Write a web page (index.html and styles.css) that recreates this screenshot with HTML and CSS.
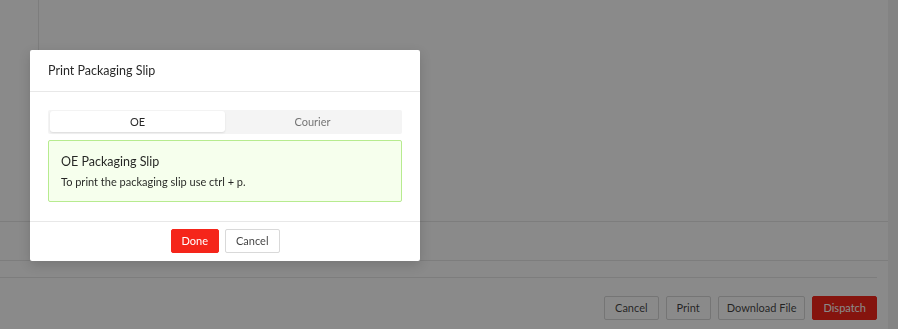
FILE: index.html
```html
<!DOCTYPE html>
<html lang="en">
<head>
<meta charset="utf-8">
<title>Print Packaging Slip</title>
<link rel="stylesheet" href="styles.css">
</head>
<body>
<div class="page">
  <div class="main">
    <div class="top">
      <div class="side"></div>
      <div class="area"></div>
    </div>
    <div class="row"></div>
    <div class="gap"></div>
    <div class="footer">
      <button class="btn">Cancel</button>
      <button class="btn">Print</button>
      <button class="btn btn-narrow">Download File</button>
      <button class="btn btn-red">Dispatch</button>
    </div>
  </div>
  <div class="scroll"></div>
</div>
<div class="overlay"></div>
<div class="modal">
  <div class="modal-header">Print Packaging Slip</div>
  <div class="modal-body">
    <div class="tabs">
      <div class="tab active">OE</div>
      <div class="tab">Courier</div>
    </div>
    <div class="alert">
      <div class="alert-title">OE Packaging Slip</div>
      <div class="alert-desc">To print the packaging slip use ctrl + p.</div>
    </div>
  </div>
  <div class="modal-footer">
    <button class="btn btn-primary">Done</button>
    <button class="btn">Cancel</button>
  </div>
</div>
</body>
</html>
```
FILE: styles.css
```css
* { box-sizing: border-box; }
html, body { margin: 0; padding: 0; }
body {
  width: 898px;
  height: 329px;
  overflow: hidden;
  background: #fff;
  font-family: Lato, "Noto Sans", sans-serif;
  color: rgba(0,0,0,0.85);
}
.page {
  display: flex;
  width: 898px;
  height: 329px;
}
.main {
  flex: 1;
  display: flex;
  flex-direction: column;
}
.scroll {
  width: 10px;
  background: #f3f3f3;
}
.top {
  height: 222px;
  display: flex;
  border-bottom: 1px solid #e8e8e8;
}
.side {
  width: 39px;
  border-right: 1px solid #e8e8e8;
}
.area { flex: 1; }
.row {
  height: 39px;
  border-bottom: 1px solid #e8e8e8;
}
.gap {
  height: 17px;
  margin-right: 11px;
  border-bottom: 1px solid #e8e8e8;
}
.footer {
  display: flex;
  justify-content: flex-end;
  gap: 7px;
  padding: 18px 11px 0 0;
}
.btn {
  height: 24px;
  padding: 0 10px;
  font-family: inherit;
  font-size: 11px;
  color: rgba(0,0,0,0.75);
  background: #fff;
  border: 1px solid #d9d9d9;
  border-radius: 2px;
  line-height: 22px;
}
.btn-narrow { padding: 0 8px; }
.btn-red {
  background: #f5251a;
  border-color: #f5251a;
  color: #fff;
}
.btn-primary {
  background: #f5251a;
  border-color: #f5251a;
  color: #fff;
}
.overlay {
  position: fixed;
  inset: 0;
  background: rgba(0,0,0,0.46);
}
.modal {
  position: absolute;
  left: 30px;
  top: 50px;
  width: 390px;
  background: #fff;
  border-radius: 2px;
  box-shadow: 0 4px 12px rgba(0,0,0,0.15);
}
.modal-header {
  height: 42px;
  padding: 0 18px;
  display: flex;
  align-items: center;
  font-size: 12.5px;
  color: rgba(0,0,0,0.85);
  border-bottom: 1px solid #e8e8e8;
}
.modal-body {
  padding: 18px 18px 19px;
}
.tabs {
  display: flex;
  background: #f4f4f4;
  padding: 1px 2px 2px;
  border-radius: 2px;
  height: 24px;
}
.tab {
  flex: 1;
  display: flex;
  align-items: center;
  justify-content: center;
  font-size: 11px;
  color: rgba(0,0,0,0.55);
  border-radius: 3px;
}
.tab.active {
  background: #fff;
  color: rgba(0,0,0,0.85);
  box-shadow: 0 1px 2px rgba(0,0,0,0.1);
}
.alert {
  margin-top: 6px;
  height: 62px;
  background: #f6ffed;
  border: 1px solid #b7eb8f;
  border-radius: 2px;
  padding: 10px 12px;
}
.alert-title {
  font-size: 12.5px;
  line-height: 22px;
  color: rgba(0,0,0,0.85);
}
.alert-desc {
  font-size: 11px;
  line-height: 18px;
  color: rgba(0,0,0,0.85);
}
.modal-footer {
  border-top: 1px solid #e8e8e8;
  padding: 7px 0 8px;
  display: flex;
  justify-content: center;
  gap: 6px;
}
```
